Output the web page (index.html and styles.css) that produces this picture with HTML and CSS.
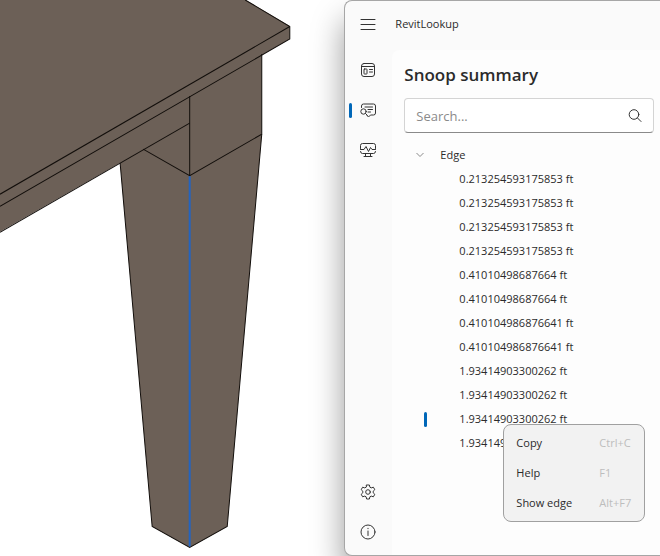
FILE: index.html
```html
<!DOCTYPE html>
<html lang="en">
<head>
    <meta charset="UTF-8">
    <meta name="viewport" content="width=device-width, initial-scale=1.0">
    <title>RevitLookup</title>
    <link rel="stylesheet" href="styles.css">
</head>
<body>
    <div class="model-view">
        <svg class="model" viewBox="0 0 344 556" preserveAspectRatio="xMinYMin slice" role="img" aria-label="Table corner with one leg">
            <g class="faces">
                <path d="M119.500 140 L120 163 L152 526 L189.500 547 L227 526 L261.500 134 V40 H189 Z"/>
                <path d="M-1 -1 H244 L289.500 26 V39 L189.500 96 V123 L-1 232 Z"/>
            </g>
            <g class="edges">
                <path d="M245 0 L289.500 26.500 V39 L0 206"/>
                <path d="M289.500 26.500 L0 194"/>
                <path d="M189.500 123 L0 232"/>
                <path d="M189.500 96 V175.500"/>
                <path d="M143 149 L189.500 175.500 L261.500 134 V54"/>
                <path d="M120 163 L152 526 L189.500 547 L227 526 L261.500 134"/>
            </g>
            <path class="picked-edge" d="M189.500 176 V546"/>
        </svg>
    </div>

    <div class="window">
        <header class="title-bar">
            <button class="nav-button" aria-label="Menu">
                <svg class="icon" viewBox="0 0 16 16"><path d="M1 3.500h14M1 8.500h14M1 13.500h14"/></svg>
            </button>
            <span class="app-name">RevitLookup</span>
        </header>

        <div class="window-body">
            <nav class="sidebar">
                <button class="nav-button" aria-label="Dashboard">
                    <svg class="icon" viewBox="0 0 16 16">
                        <rect x="1.500" y="1.500" width="13" height="13" rx="2.500"/>
                        <path d="M1.500 4.500h13M9.500 7.500h3M9.500 10h3"/>
                        <rect x="4" y="7" width="3" height="5" rx=".5"/>
                    </svg>
                </button>
                <button class="nav-button active" aria-label="Snoop summary">
                    <svg class="icon" viewBox="0 0 16 16">
                        <path d="M1.500 5.500V4a2 2 0 0 1 2-2h10a2 2 0 0 1 2 2v7a2 2 0 0 1-2 2h-3l-2 2-1.500-1.500"/>
                        <path d="M5 5h7.500M8 7.500h4.500M8 10h2.500"/>
                        <circle cx="3.500" cy="9.500" r="2.700"/>
                        <path d="M5.500 11.500l2 2"/>
                    </svg>
                </button>
                <button class="nav-button" aria-label="Events">
                    <svg class="icon" viewBox="0 0 16 16">
                        <path d="M.5 6.500v-3a2 2 0 0 1 2-2h11a2 2 0 0 1 2 2v3M.5 9.500a2 2 0 0 0 2 2h11a2 2 0 0 0 2-2"/>
                        <path d="M.5 7.500h3.500l2-3 2.500 5 2-4 1.500 2h3.500M5.500 11.500v3M10.500 11.500v3M4 14.500h8"/>
                    </svg>
                </button>
                <button class="nav-button first-bottom" aria-label="Settings">
                    <svg class="icon" viewBox="0 0 16 16">
                        <path d="M6.600 1h2.800l.5 2.200 1.300.7 2.200-.7 1.400 2.500-1.600 1.500v1.600l1.600 1.500-1.400 2.500-2.200-.7-1.300.7-.5 2.200H6.600l-.5-2.200-1.300-.7-2.200.7-1.400-2.500 1.600-1.500V7.200L1.200 5.700l1.400-2.500 2.200.7 1.300-.7z"/>
                        <circle cx="8" cy="8" r="2.300"/>
                    </svg>
                </button>
                <button class="nav-button" aria-label="About">
                    <svg class="icon" viewBox="0 0 16 16">
                        <circle cx="8" cy="8" r="7"/>
                        <path d="M8 7v4.500M8 4.300v.4"/>
                    </svg>
                </button>
            </nav>

            <main class="content">
                <h1>Snoop summary</h1>
                <div class="search-box">
                    <input type="text" placeholder="Search..." aria-label="Search">
                    <button class="search-button" aria-label="Search">
                        <svg class="icon" viewBox="0 0 16 16"><circle cx="7" cy="6.500" r="4.800"/><path d="M10.500 10l3.500 3.500"/></svg>
                    </button>
                </div>

                <div class="tree">
                    <button class="tree-group" aria-expanded="true">
                        <svg class="chevron" viewBox="0 0 8 8"><path d="M.5 2L4 5.500 7.500 2"/></svg>
                        Edge
                    </button>
                    <ul class="tree-items">
                        <li><button class="tree-item">0.213254593175853 ft</button></li>
                        <li><button class="tree-item">0.213254593175853 ft</button></li>
                        <li><button class="tree-item">0.213254593175853 ft</button></li>
                        <li><button class="tree-item">0.213254593175853 ft</button></li>
                        <li><button class="tree-item">0.41010498687664 ft</button></li>
                        <li><button class="tree-item">0.41010498687664 ft</button></li>
                        <li><button class="tree-item">0.410104986876641 ft</button></li>
                        <li><button class="tree-item">0.410104986876641 ft</button></li>
                        <li><button class="tree-item">1.93414903300262 ft</button></li>
                        <li><button class="tree-item">1.93414903300262 ft</button></li>
                        <li>
                            <button class="tree-item selected">1.93414903300262 ft</button>
                            <div class="context-menu" role="menu">
                                <button role="menuitem">Copy <kbd>Ctrl+C</kbd></button>
                                <button role="menuitem">Help <kbd>F1</kbd></button>
                                <button role="menuitem">Show edge <kbd>Alt+F7</kbd></button>
                            </div>
                        </li>
                        <li><button class="tree-item">1.93414903300262 ft</button></li>
                    </ul>
                </div>
            </main>
        </div>
    </div>
</body>
</html>
```

FILE: styles.css
```css
* {
    box-sizing: border-box;
    margin: 0;
    padding: 0;
}

body {
    display: grid;
    grid-template-columns: 12fr 11fr;
    min-height: 100vh;
    font-family: "Segoe UI", "Open Sans", sans-serif;
    font-size: 11px;
    line-height: 16px;
    color: #2b2b2b;
    background-color: #fff;
    overflow-x: hidden;
}

button,
input,
kbd {
    font: inherit;
    color: inherit;
    border: none;
    background: none;
}

ul {
    list-style: none;
}

/* 3D view */
.model-view {
    position: relative;
    overflow: hidden;
}

.model {
    position: absolute;
    width: 100%;
    height: 100%;
}

.faces {
    fill: #6c6057;
}

.edges {
    fill: none;
    stroke: #120e0b;
}

.picked-edge {
    stroke: #2464c0;
    stroke-width: 2;
}

/* Window */
.window {
    position: relative;
    display: flex;
    flex-direction: column;
    background-color: #fafafa;
    border: 1px solid #a6a6a6;
    border-right: none;
    border-radius: 8px 0 0 8px;
    box-shadow: 0 20px 32px rgba(0, 0, 0, 0.4);
}

.title-bar {
    display: flex;
    align-items: center;
    height: 49px;
    padding-bottom: 3px;
}

.app-name {
    margin-left: 3px;
}

.window-body {
    display: flex;
    flex: 1;
}

.sidebar {
    display: flex;
    flex-direction: column;
    padding-bottom: 3px;
}

.nav-button {
    display: flex;
    align-items: center;
    padding-left: 4px;
    width: 47px;
    height: 40px;
}

.nav-button::before {
    content: "";
    width: 3px;
    height: 15px;
    margin-right: 8px;
    border-radius: 2px;
}

.nav-button.active::before {
    background-color: #0067b8;
}

.first-bottom {
    margin-top: auto;
}

.icon {
    width: 16px;
    height: 16px;
    fill: none;
    stroke: #333;
    stroke-linecap: round;
    stroke-linejoin: round;
}

.content {
    flex: 1;
    padding: 12px 6px 12px 12px;
    background-color: #fdfdfd;
    border-top-left-radius: 8px;
}

h1 {
    font-size: 17px;
    font-weight: 600;
    line-height: 26px;
}

.search-box {
    display: flex;
    align-items: center;
    height: 35px;
    margin: 10px 0;
    padding: 0 10px 0 11px;
    background-color: #fff;
    border: 1px solid #d4d4d4;
    border-bottom-color: #8a8a8a;
    border-radius: 4px;
}

.search-box input {
    flex: 1;
    min-width: 0;
    font-size: 13px;
    outline: none;
}

.search-box input::placeholder {
    color: #8a8a8a;
}

.search-button {
    display: flex;
}

/* Tree */
.tree {
    padding-left: 12px;
}

.tree-group,
.tree-item {
    display: flex;
    align-items: center;
    width: 100%;
    height: 24px;
}

.tree-group {
    gap: 16px;
}

.chevron {
    width: 8px;
    height: 8px;
    fill: none;
    stroke: #8a8a8a;
}

.tree-items {
    padding-left: 8px;
}

.tree-items li {
    position: relative;
}

.tree-item::before {
    content: "";
    width: 3px;
    height: 15px;
    margin-right: 32px;
    border-radius: 2px;
}

.tree-item.selected::before {
    background-color: #0067b8;
}

/* Context menu */
.context-menu {
    position: absolute;
    z-index: 1;
    top: 17px;
    left: 79px;
    width: 142px;
    padding: 3px 12px;
    background-color: #f2f2f2;
    border: 1px solid #a0a0a0;
    border-radius: 8px;
}

.context-menu button {
    display: flex;
    justify-content: space-between;
    align-items: center;
    width: 100%;
    height: 30px;
    text-align: left;
}

.context-menu kbd {
    width: 33px;
    color: #bdbdbd;
    white-space: nowrap;
}
```
